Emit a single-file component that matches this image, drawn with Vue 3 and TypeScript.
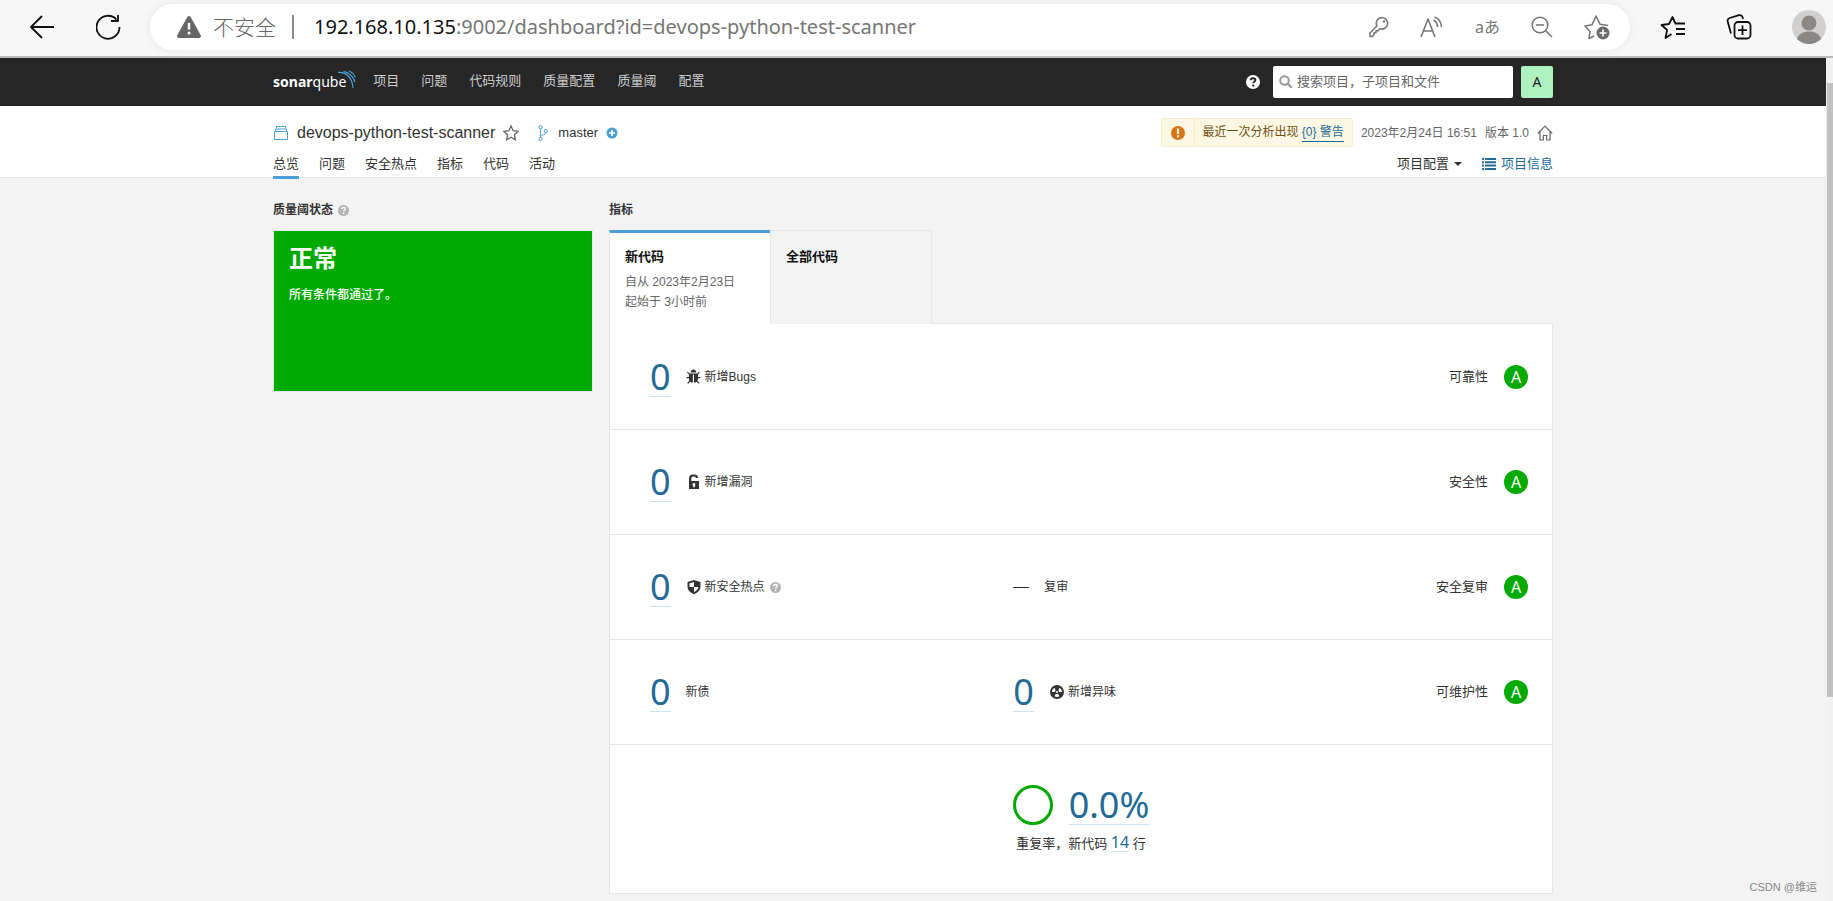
<script setup lang="ts">
interface Measure {
  value: string
  label: string
  icon?: 'bug' | 'unlock' | 'shield' | 'smell'
  help?: boolean
}
interface MeasureRow {
  main: Measure
  extra?: Measure
  rating: string
  grade: string
}

const globalNav: string[] = ['项目', '问题', '代码规则', '质量配置', '质量阈', '配置']
const projectTabs: string[] = ['总览', '问题', '安全热点', '指标', '代码', '活动']

const rows: MeasureRow[] = [
  { main: { value: '0', label: '新增Bugs', icon: 'bug' }, rating: '可靠性', grade: 'A' },
  { main: { value: '0', label: '新增漏洞', icon: 'unlock' }, rating: '安全性', grade: 'A' },
  {
    main: { value: '0', label: '新安全热点', icon: 'shield', help: true },
    extra: { value: '', label: '复审' },
    rating: '安全复审',
    grade: 'A',
  },
  {
    main: { value: '0', label: '新债' },
    extra: { value: '0', label: '新增异味', icon: 'smell' },
    rating: '可维护性',
    grade: 'A',
  },
]

const iconPaths: Record<string, string> = {
  bug: 'M1632 960q0 26-19 45t-45 19h-224q0 171-67 290l208 209q19 19 19 45t-19 45q-18 19-45 19t-45-19l-198-197q-5 5-15 13t-42 28.500-65 36.500-82 29-97 13v-896h-128v896q-51 0-101.500-13.500t-87-33-66-39-43.500-32.500l-15-14-183 207q-20 21-48 21-24 0-43-17-19-18-20.500-44.500t15.500-46.500l202-227q-58-114-58-274h-224q-26 0-45-19t-19-45 19-45 45-19h224v-294l-173-173q-19-19-19-45t19-45 45-19 45 19l173 173h844l173-173q19-19 45-19t45 19 19 45-19 45l-173 173v294h224q26 0 45 19t19 45zm-480-576h-640q0-133 93.500-226.500t226.500-93.500 226.500 93.500 93.500 226.500z',
  unlock: 'M3 7V4.500a4 4 0 0 1 4-4h1.500a3.500 3.500 0 0 1 3.500 3.500H10a1.700 1.700 0 0 0-1.700-1.500H7.200A1.900 1.900 0 0 0 5.300 4.400V7H13v8H3zM8 9a1.500 1.500 0 0 0-1.500 1.500c0 .6.300 1 .7 1.300V13.200h1.600v-1.400c.4-.3.700-.7.700-1.300A1.500 1.500 0 0 0 8 9z',
  shield: 'M8 1l6.500 2v4.500c0 3.500-2.500 6-6.500 7.800C4 13.500 1.500 11 1.500 7.500V3zM8 3L3.400 4.400V8H8v5.100c2.700-1.300 4.200-3 4.600-5.100H8z',
  smell: 'M8 1a7 7 0 1 1 0 14A7 7 0 0 1 8 1zM6.700 6.200L5.300 3.700A5 5 0 0 0 3 8h3a2 2 0 0 1 .7-1.800zM10 8h3a5 5 0 0 0-2.300-4.300L9.300 6.200A2 2 0 0 1 10 8zM6.900 9.700l-1.500 2.600a5 5 0 0 0 5.200 0L9.100 9.700a2 2 0 0 1-2.200 0zM8 7a1 1 0 1 0 0 2 1 1 0 0 0 0-2z',
}
</script>

<template>
  <div class="window">
    <header class="browser">
      <button class="chrome-btn back" aria-label="后退">
        <svg width="24" height="24" viewBox="0 0 24 24"><path d="M24 12H1M12 1L1 12l11 11" class="ink" /></svg>
      </button>
      <button class="chrome-btn reload" aria-label="刷新">
        <svg width="26" height="26" viewBox="0 0 26 26"><path d="M20.500 5.500A11.500 11.500 0 1 0 23.500 13M22 1v6h-7" class="ink" /></svg>
      </button>
      <div class="address">
        <button class="security">
          <svg width="24" height="22" viewBox="0 0 24 22">
            <path d="M12 0c.8 0 1.300.4 1.700 1.100l10 18.200c.7 1.300-.1 2.700-1.600 2.700H1.900C.4 22-.4 20.600.3 19.300l10-18.200C10.700.4 11.200 0 12 0z" fill="#666" />
            <path d="M12 7v6.500" stroke="#fff" stroke-width="2.400" /><circle cx="12" cy="17" r="1.500" fill="#fff" />
          </svg>
          <span>不安全</span>
        </button>
        <span class="divider"></span>
        <a class="url" href="#"><b>192.168.10.135</b>:9002/dashboard?id=devops-python-test-scanner</a>
        <div class="address-tools">
          <button aria-label="密码">
            <svg width="20" height="22" viewBox="0 0 20 22"><path d="M13 1.500a5.800 5.800 0 1 1-2 11.300L9 14.800H7v2H5v2L3.400 20.500H1V17l6.800-7A5.900 5.900 0 0 1 13 1.500z" class="soft" /><circle cx="15" cy="5.500" r="1.200" fill="#777" /></svg>
          </button>
          <button aria-label="朗读">
            <svg width="24" height="22" viewBox="0 0 24 22"><path d="M1 21L8 3l7 18M3.500 15h9M13.500 4a8 8 0 0 1 4 7M14.500 1A11 11 0 0 1 21.500 11" class="soft" /></svg>
          </button>
          <button aria-label="翻译" class="translate">aあ</button>
          <button aria-label="缩小">
            <svg width="22" height="22" viewBox="0 0 22 22"><circle cx="9" cy="9" r="7.800" class="soft" /><path d="M5 9h8M14.500 14.500L21 21" class="soft" /></svg>
          </button>
          <button aria-label="收藏">
            <svg width="26" height="26" viewBox="0 0 26 26"><path d="M10 22l-5 2.500 1-7L1 12l7-1.200L12 2l4 8.200 8 1.300" class="soft" /><circle cx="19" cy="19" r="6.500" fill="#6b6b6b" /><path d="M19 15.500v7M15.500 19h7" stroke="#fff" stroke-width="1.600" /></svg>
          </button>
        </div>
      </div>
      <button class="chrome-btn" aria-label="收藏夹">
        <svg width="26" height="26" viewBox="0 0 26 26"><path d="M11.500 20L5.500 24l1.600-8L1.500 11l7.500-1 3.500-7 3 6.500H25M16 15h9M16 20h9" class="ink" /></svg>
      </button>
      <button class="chrome-btn" aria-label="集锦">
        <svg width="26" height="26" viewBox="0 0 26 26"><path d="M5 19.500L1.700 7.500a3 3 0 0 1 2-3.500L13 1.200a3 3 0 0 1 3.600 2L17 5" class="ink" /><rect x="8.500" y="8" width="16" height="16.500" rx="3.500" class="ink" /><path d="M16.500 11.500v9.500M12 16.200h9" class="ink" /></svg>
      </button>
      <button class="chrome-btn" aria-label="个人资料">
        <svg width="34" height="34" viewBox="0 0 34 34"><circle cx="17" cy="17" r="17" fill="#d2d0ce" /><circle cx="17" cy="13" r="7.500" fill="#8a8886" /><path d="M5 29c1.500-5 6-7.500 12-7.500S27.500 24 29 29a17 17 0 0 1-24 0z" fill="#8a8886" /></svg>
      </button>
    </header>

    <div class="viewport">
      <div class="page">
        <nav class="global-nav">
          <div class="container nav-inner">
            <a class="logo" href="#" aria-label="sonarqube">
              <span class="logo-text"><b>sonar</b>qube</span>
              <svg width="20" height="20" viewBox="0 0 20 20"><path d="M1 2.500C10 2 15.500 8.500 16 18M6.500 1.300C12.500 2.500 16.500 7 18 12M12 .8c3 1.400 5.200 3.700 6.500 6.400" fill="none" stroke="#4b9fd5" stroke-width="1.200" /></svg>
            </a>
            <ul class="nav-list">
              <li v-for="item in globalNav" :key="item"><a href="#">{{ item }}</a></li>
            </ul>
            <button class="help" aria-label="帮助">
              <svg width="14" height="14" viewBox="0 0 14 14"><circle cx="7" cy="7" r="7" fill="#fff" /><path d="M4.700 5.300C4.800 3.800 5.700 3.200 7 3.200s2.400.7 2.400 1.900c0 1.600-2.200 1.600-2.200 3.200" fill="none" stroke="#262626" stroke-width="1.900" /><circle cx="7.200" cy="10.600" r="1.100" fill="#262626" /></svg>
            </button>
            <label class="search">
              <svg width="14" height="14" viewBox="0 0 14 14"><circle cx="5.500" cy="5.500" r="4.300" fill="none" stroke="#999" stroke-width="2" /><path d="M8.800 8.800l4 4" stroke="#999" stroke-width="2.200" /></svg>
              <input type="text" aria-label="搜索" placeholder="搜索项目，子项目和文件" />
            </label>
            <button class="avatar">A</button>
          </div>
        </nav>

        <header class="project">
          <div class="container project-inner">
            <div class="project-row">
              <svg width="16" height="16" viewBox="0 0 16 16"><path d="M1.500 6.500h13v8h-13zM2.500 6V4h11v2M3.500 3.500v-2h9v2" fill="none" stroke="#4b9fd5" /></svg>
              <a class="project-name" href="#">devops-python-test-scanner</a>
              <button class="favorite" aria-label="收藏项目">
                <svg width="16" height="16" viewBox="0 0 16 16"><path d="M8 1l2.100 4.700 5.100.6-3.800 3.400 1 5.100L8 12.300l-4.400 2.500 1-5.100L.8 6.300l5.100-.6z" fill="none" stroke="#666" stroke-width="1.300" /></svg>
              </button>
              <svg class="branch-icon" width="10" height="16" viewBox="0 0 10 16"><g fill="none" stroke="#4b9fd5"><circle cx="2.500" cy="2.200" r="1.600" /><circle cx="2.500" cy="13.800" r="1.600" /><circle cx="7.800" cy="6" r="1.600" /><path d="M2.500 4v8M7.800 7.800C7.500 9.800 4 9.500 2.800 11.500" /></g></svg>
              <span class="branch">master</span>
              <button class="add" aria-label="添加分支">
                <svg width="12" height="12" viewBox="0 0 12 12"><circle cx="6" cy="6" r="5.500" fill="#4b9fd5" /><path d="M6 3v6M3 6h6" stroke="#fff" stroke-width="1.600" /></svg>
              </button>
              <div class="project-meta">
                <div class="warning">
                  <span class="warning-icon">
                    <svg width="14" height="14" viewBox="0 0 14 14"><circle cx="7" cy="7" r="7" fill="#d97416" /><path d="M7 2.500V8" stroke="#fdf8e4" stroke-width="2.200" /><path d="M7 9.300v2.200" stroke="#fdf8e4" stroke-width="2.200" /></svg>
                  </span>
                  <span class="warning-text">最近一次分析出现 <a href="#">{0} 警告</a></span>
                </div>
                <time class="date">2023年2月24日 16:51</time>
                <span class="version">版本 1.0</span>
                <button class="home" aria-label="设为主页">
                  <svg width="16" height="16" viewBox="0 0 16 16"><path d="M.8 8.500L8 1.200l7.200 7.300M3 7v8h3.300v-4.500h3.400V15H13V7" fill="none" stroke="#666" stroke-width="1.200" /></svg>
                </button>
              </div>
            </div>
            <div class="tab-row">
              <a v-for="(tab, i) in projectTabs" :key="tab" href="#" class="tab" :class="{ active: i === 0 }">{{ tab }}</a>
              <button class="settings">项目配置 <svg width="8" height="4" viewBox="0 0 8 4"><path d="M0 0h8L4 4z" fill="#333" /></svg></button>
              <a class="info" href="#">
                <svg width="14" height="12" viewBox="0 0 14 12"><path d="M0 1h2M3 1h11M0 4.300h2M3 4.300h11M0 7.600h2M3 7.600h11M0 11h2M3 11h11" stroke="#236a97" stroke-width="2" /></svg>
                项目信息
              </a>
            </div>
          </div>
        </header>

        <main class="container overview">
          <section>
            <h2>质量阈状态
              <svg width="11" height="11" viewBox="0 0 14 14"><circle cx="7" cy="7" r="7" fill="#b4b4b4" /><path d="M4.700 5.300C4.800 3.800 5.700 3.200 7 3.200s2.400.7 2.400 1.900c0 1.600-2.200 1.600-2.200 3.200" fill="none" stroke="#fff" stroke-width="1.700" /><circle cx="7.200" cy="10.600" r="1.100" fill="#fff" /></svg>
            </h2>
            <div class="gate">
              <strong>正常</strong>
              <p>所有条件都通过了。</p>
            </div>
          </section>

          <section>
            <h2>指标</h2>
            <div class="measure-tabs">
              <button class="measure-tab selected">
                <b>新代码</b>
                <span>自从 2023年2月23日</span>
                <span>起始于 3小时前</span>
              </button>
              <button class="measure-tab"><b>全部代码</b></button>
              <span class="tab-rest"></span>
            </div>
            <div class="panel">
              <div v-for="row in rows" :key="row.rating" class="measure-row">
                <div v-for="(m, i) in [row.main, row.extra]" :key="i" class="measure">
                  <template v-if="m">
                    <a v-if="m.value" class="value" href="#">{{ m.value }}</a>
                    <span v-else class="no-value"></span>
                    <span class="measure-label">
                      <svg v-if="m.icon" width="16" height="16" :viewBox="m.icon === 'bug' ? '0 0 1792 1792' : '0 0 16 16'"><path :d="iconPaths[m.icon]" fill="#333" fill-rule="evenodd" /></svg>
                      {{ m.label }}
                      <svg v-if="m.help" class="hint" width="11" height="11" viewBox="0 0 14 14"><circle cx="7" cy="7" r="7" fill="#b4b4b4" /><path d="M4.700 5.300C4.800 3.800 5.700 3.200 7 3.200s2.400.7 2.400 1.900c0 1.600-2.200 1.600-2.200 3.200" fill="none" stroke="#fff" stroke-width="1.700" /><circle cx="7.200" cy="10.600" r="1.100" fill="#fff" /></svg>
                    </span>
                  </template>
                </div>
                <div class="rating">{{ row.rating }}<a href="#" class="grade">{{ row.grade }}</a></div>
              </div>
              <div class="duplication">
                <div class="dup-main">
                  <svg width="40" height="40" viewBox="0 0 40 40"><circle cx="20" cy="20" r="18.500" fill="none" stroke="#0a0" stroke-width="3" /></svg>
                  <a class="value" href="#">0.0%</a>
                </div>
                <p>重复率，新代码 <a href="#">14</a> 行</p>
              </div>
            </div>
          </section>
        </main>
      </div>
      <div class="scrollbar"><span class="thumb"></span></div>
    </div>
    <span class="watermark">CSDN @维运</span>
  </div>
</template>

<style>
body {
  margin: 0;
  background: #f3f3f3;
}
</style>

<style scoped>
.window {
  position: relative;
  display: flex;
  flex-direction: column;
  min-height: 100vh;
  box-sizing: border-box;
  color: #333;
  font: 13px/20px "Liberation Sans", "Noto Sans CJK SC", sans-serif;
}
.window *,
.window *::before {
  box-sizing: border-box;
}
a {
  color: inherit;
  text-decoration: none;
}
button {
  display: inline-flex;
  align-items: center;
  padding: 0;
  border: 0;
  background: none;
  color: inherit;
  font: inherit;
  cursor: pointer;
}
svg {
  display: block;
  flex: none;
}
ul,
h2,
p {
  margin: 0;
  padding: 0;
}
.ink,
.soft {
  fill: none;
  stroke: #111;
  stroke-width: 1.8;
  stroke-linejoin: round;
}
.soft {
  stroke: #777;
  stroke-width: 1.6;
}

.browser {
  display: flex;
  align-items: center;
  height: 58px;
  padding: 0 7px 2px 30px;
  background: #f7f7f7;
  border-bottom: 2px solid #b9bbbb;
  font-family: "Noto Sans", "Noto Sans CJK SC", sans-serif;
}
.back {
  margin-right: 42px;
}
.reload {
  margin-right: 28px;
}
.address {
  display: flex;
  flex: 1;
  align-items: center;
  height: 46px;
  margin-right: 30px;
  padding: 0 20px 0 27px;
  background: #fff;
  border-radius: 23px;
  box-shadow: 0 0 6px 2px #ececec;
  color: #767676;
  font-size: 20px;
}
.security {
  gap: 12px;
  color: #666;
  font-size: 21px;
  font-weight: 300;
}
.divider {
  width: 2px;
  height: 24px;
  margin: 0 20px 0 16px;
  background: #8c8c8c;
}
.url b {
  color: #111;
  font-weight: 400;
}
.address-tools {
  display: flex;
  align-items: center;
  gap: 31px;
  margin-left: auto;
}
.translate {
  color: #777;
  font-size: 16px;
}
.chrome-btn + .chrome-btn {
  margin-left: 40px;
}
.browser .back + .reload {
  margin-left: 0;
}

.viewport {
  display: flex;
  flex: 1;
}
.page {
  flex: 1;
  min-width: 0;
  padding-bottom: 7px;
}
.scrollbar {
  display: flex;
  justify-content: flex-end;
  width: 7px;
  padding-top: 25px;
  background: #f1f1f1;
}
.thumb {
  width: 6px;
  height: 75%;
  background: #c1c1c1;
}
.container {
  max-width: 1280px;
  margin: 0 auto;
}

.global-nav {
  background: #262626;
}
.nav-inner {
  display: flex;
  align-items: center;
  height: 48px;
}
.logo {
  display: flex;
  align-items: center;
  margin-right: 16px;
  color: #fff;
  font: 14px/20px "Noto Sans", sans-serif;
}
.logo svg {
  margin: -4px 0 0 -9px;
}
.nav-list {
  display: flex;
  gap: 22px;
  padding-bottom: 2px;
  list-style: none;
  color: #ccc;
}
.help {
  margin: 0 13px 0 auto;
}
.search {
  display: flex;
  align-items: center;
  gap: 4px;
  width: 240px;
  height: 32px;
  padding: 0 6px;
  background: #fff;
  border-radius: 2px;
}
.search input {
  flex: 1;
  min-width: 0;
  padding: 0;
  border: 0;
  outline: 0;
  background: none;
  font: inherit;
}
.search input::placeholder {
  color: #666;
  opacity: 1;
}
.avatar {
  justify-content: center;
  width: 32px;
  height: 32px;
  margin-left: 8px;
  background: #aef2bf;
  border-radius: 2px;
  color: #222;
  font: 14px/20px "Noto Sans", sans-serif;
}

.project {
  background: #fff;
  border-bottom: 1px solid #e6e6e6;
}
.project-inner {
  padding-top: 12px;
}
.project-row {
  display: flex;
  align-items: center;
  height: 29px;
}
.project-name {
  margin: 0 8px;
  font-size: 16px;
}
.branch-icon {
  margin: 0 10px 0 19px;
}
.add {
  margin-left: 8px;
}
.project-meta {
  display: flex;
  align-items: center;
  margin-left: auto;
  color: #666;
  font-size: 12px;
}
.warning {
  display: flex;
  height: 29px;
  background: #fdf8e4;
  border: 1px solid #faebcc;
  border-radius: 2px;
  color: #6f4f17;
}
.warning-icon {
  display: flex;
  align-items: center;
  padding: 0 9px;
  border-right: 1px solid #faebcc;
}
.warning-text {
  padding: 3px 8px;
}
.warning-text a {
  display: inline-block;
  line-height: 18px;
  border-bottom: 1px solid #236a97;
  color: #236a97;
}
.date {
  margin: 0 8px;
}
.home {
  margin-left: 8px;
}
.tab-row {
  display: flex;
  gap: 20px;
  height: 30px;
  padding-top: 5px;
  line-height: 24px;
}
.tab {
  height: 27px;
}
.tab.active {
  border-bottom: 3px solid #4b9fd5;
}
.settings,
.info {
  display: flex;
  align-items: center;
  gap: 5px;
  height: 24px;
}
.settings {
  margin-left: auto;
}
.info {
  color: #236a97;
}

.overview {
  display: grid;
  grid-template-columns: 320px minmax(0, 1fr);
  gap: 16px;
  padding-top: 22px;
}
h2 {
  display: flex;
  align-items: center;
  gap: 5px;
  height: 20px;
  margin-bottom: 10px;
  font-size: 12px;
  font-weight: 700;
}
.gate {
  min-height: 162px;
  padding: 12px 15px;
  background: #0a0;
  border: 1px solid #e6e6e6;
  color: #fff;
}
.gate strong {
  display: block;
  font-size: 24px;
  line-height: 32px;
}
.gate p {
  margin-top: 10px;
  font-size: 12px;
  font-weight: 500;
}

.measure-tabs {
  display: flex;
  height: 94px;
}
.measure-tab {
  flex-direction: column;
  align-items: flex-start;
  width: 162px;
  padding: 16px 15px 0;
  border: 1px solid #e6e6e6;
  border-bottom: 0;
  background: #f3f3f3;
  text-align: left;
}
.measure-tab.selected {
  width: 161px;
  padding-top: 14px;
  border-top: 3px solid #4b9fd5;
  border-right: 0;
  background: #fff;
}
.measure-tab b {
  margin-bottom: 5px;
  color: #111;
}
.measure-tab span {
  color: #666;
  font-size: 12px;
}
.tab-rest {
  flex: 1;
  border-bottom: 1px solid #e6e6e6;
}
.panel {
  padding-top: 1px;
  background: #fff;
  border: 1px solid #e6e6e6;
  border-top: 0;
}
.measure-row {
  position: relative;
  display: grid;
  grid-template-columns: 12fr 17fr;
  align-items: center;
  height: 105px;
  padding: 0 24px 0 40px;
  border-bottom: 1px solid #e6e6e6;
}
.measure {
  display: flex;
  align-items: center;
}
.value {
  border-bottom: 1px solid #cae3f2;
  color: #236a97;
  font: 36px/38px "Noto Sans", sans-serif;
}
.no-value {
  width: 16px;
  height: 1px;
  background: #333;
}
.measure-label {
  display: flex;
  align-items: center;
  gap: 3px;
  margin-left: 15px;
  font-size: 12px;
}
.hint {
  margin-left: 2px;
}
.rating {
  position: absolute;
  right: 24px;
  display: flex;
  align-items: center;
  gap: 16px;
}
.grade {
  width: 24px;
  height: 24px;
  border-radius: 50%;
  background: #0a0;
  color: #fff;
  font: 16px/24px "Noto Sans", sans-serif;
  text-align: center;
}
.duplication {
  display: flex;
  flex-direction: column;
  align-items: center;
  height: 148px;
  padding-top: 40px;
}
.dup-main {
  display: flex;
  align-items: center;
  gap: 16px;
}
.duplication p {
  margin-top: 7px;
  line-height: 24px;
}
.duplication p a {
  display: inline-block;
  border-bottom: 1px solid #cae3f2;
  color: #236a97;
  font: 16px/18px "Noto Sans", sans-serif;
}
.watermark {
  position: absolute;
  right: 16px;
  bottom: 4px;
  color: #888;
  font-size: 11px;
}
</style>
